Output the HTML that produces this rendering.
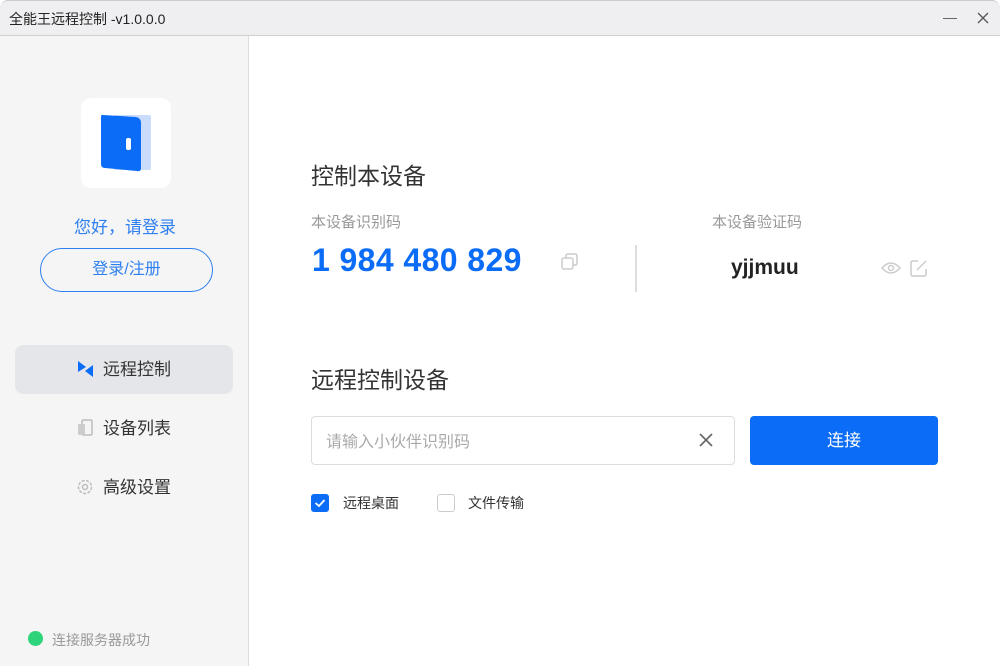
<!DOCTYPE html>
<html><head><meta charset="utf-8"><style>
*{margin:0;padding:0;box-sizing:border-box}
body{width:1000px;height:666px;overflow:hidden;background:#fff;font-family:"Liberation Sans","Noto Sans CJK SC",sans-serif;position:relative}
.a{position:absolute}
.title{left:0;top:0;width:1000px;height:36px;background:#efeff1;border-bottom:1px solid #d0d0d0;border-radius:8px 8px 0 0;border-top:1px solid #ccc}
.side{left:0;top:36px;width:249px;height:630px;background:#f5f5f5;border-right:1px solid #ddd}
.t{white-space:nowrap}
</style></head><body>
<div class="a title"></div>
<div class="a t" style="left:9px;top:9px;font-size:14px;color:#222">全能王远程控制 -v1.0.0.0</div>
<div class="a" style="left:943px;top:18px;width:14px;height:1px;background:#666"></div>
<svg class="a" style="left:977px;top:12px" width="12" height="12"><path d="M1 1L11 11M11 1L1 11" stroke="#555" stroke-width="1.3"/></svg>
<div class="a side"></div>
<div class="a" style="left:81px;top:98px;width:90px;height:90px;background:#fff;border-radius:10px"></div>
<svg class="a" style="left:100px;top:113px" width="52" height="60">
<rect x="14" y="2" width="37" height="55" rx="2" fill="#c9dcfb"/>
<path d="M3 2 L36 4 Q41 5 41 10 L41 55 Q41 59 37 58 L5 55 Q1 55 1 51 L1 5 Q1 1 3 2Z" fill="#0a6cf7"/>
<rect x="26" y="25" width="5" height="12" rx="2" fill="#fff"/>
</svg>
<div class="a t" style="left:74px;top:213px;font-size:17px;color:#2e7ff0">您好，请登录</div>
<div class="a" style="left:40px;top:248px;width:173px;height:44px;border:1.5px solid #2e7ff0;border-radius:22px;color:#2e7ff0;font-size:16px;text-align:center;line-height:41px">登录/注册</div>
<div class="a" style="left:15px;top:345px;width:218px;height:49px;background:#e5e6ea;border-radius:8px"></div>
<svg class="a" style="left:77px;top:360px" width="17" height="18"><path d="M1 1L9 7L1 12Z" fill="#0a6cf7"/><path d="M16 5L8 11L16 17Z" fill="#0a6cf7"/></svg>
<div class="a t" style="left:103px;top:355px;font-size:17px;color:#333">远程控制</div>
<svg class="a" style="left:77px;top:419px" width="16" height="18"><rect x="5" y="1" width="10" height="15" rx="1.5" fill="none" stroke="#bbb" stroke-width="1.5"/><rect x="1" y="5" width="7" height="11" rx="1" fill="#ccc"/></svg>
<div class="a t" style="left:103px;top:414px;font-size:17px;color:#333">设备列表</div>
<svg class="a" style="left:76px;top:478px" width="18" height="18"><circle cx="9" cy="9" r="6.5" fill="none" stroke="#bbb" stroke-width="1.5" stroke-dasharray="3 1.5"/><circle cx="9" cy="9" r="2.5" fill="none" stroke="#bbb" stroke-width="1.5"/></svg>
<div class="a t" style="left:103px;top:473px;font-size:17px;color:#333">高级设置</div>
<div class="a" style="left:28px;top:631px;width:15px;height:15px;border-radius:50%;background:#2ed47a"></div>
<div class="a t" style="left:52px;top:630px;font-size:14px;color:#999">连接服务器成功</div>

<div class="a t" style="left:311px;top:157px;font-size:23px;color:#333">控制本设备</div>
<div class="a t" style="left:311px;top:211px;font-size:15px;color:#999">本设备识别码</div>
<div class="a t" style="left:312px;top:242px;font-size:32px;font-weight:bold;color:#0a6cf7;letter-spacing:0.4px">1 984 480 829</div>
<svg class="a" style="left:561px;top:253px" width="18" height="18"><rect x="1" y="5" width="11" height="11" rx="2" fill="none" stroke="#ccc" stroke-width="1.5"/><path d="M5 5V3Q5 1 7 1H14Q16 1 16 3V10Q16 12 14 12H12" fill="none" stroke="#ccc" stroke-width="1.5"/></svg>
<div class="a" style="left:635px;top:245px;width:2px;height:47px;background:#ddd"></div>
<div class="a t" style="left:712px;top:211px;font-size:15px;color:#999">本设备验证码</div>
<div class="a t" style="left:731px;top:256px;font-size:21px;font-weight:bold;color:#222">yjjmuu</div>
<svg class="a" style="left:881px;top:261px" width="20" height="14"><path d="M1 7Q10 -3 19 7Q10 17 1 7Z" fill="none" stroke="#ccc" stroke-width="1.5"/><circle cx="10" cy="7" r="2.5" fill="none" stroke="#ccc" stroke-width="1.5"/></svg>
<svg class="a" style="left:910px;top:259px" width="18" height="18"><path d="M8 2H3Q1 2 1 4V15Q1 17 3 17H14Q16 17 16 15V10" fill="none" stroke="#ccc" stroke-width="1.5"/><path d="M7 11L16 2" stroke="#ccc" stroke-width="1.5"/></svg>

<div class="a t" style="left:311px;top:361px;font-size:23px;color:#333">远程控制设备</div>
<div class="a" style="left:311px;top:416px;width:424px;height:49px;border:1px solid #ddd;border-radius:4px"></div>
<div class="a t" style="left:326px;top:428px;font-size:16px;color:#aaa">请输入小伙伴识别码</div>
<svg class="a" style="left:698px;top:432px" width="16" height="16"><path d="M2 2L14 14M14 2L2 14" stroke="#666" stroke-width="1.6"/></svg>
<div class="a" style="left:750px;top:416px;width:188px;height:49px;background:#0a6cf7;border-radius:4px;color:#fff;font-size:17px;text-align:center;line-height:49px">连接</div>
<div class="a" style="left:311px;top:494px;width:18px;height:18px;background:#0a6cf7;border-radius:3px"></div>
<svg class="a" style="left:311px;top:494px" width="18" height="18"><path d="M4.5 9L8 12L13.5 6" fill="none" stroke="#fff" stroke-width="1.8"/></svg>
<div class="a t" style="left:343px;top:493px;font-size:14px;color:#333">远程桌面</div>
<div class="a" style="left:437px;top:494px;width:18px;height:18px;border:1px solid #ccc;border-radius:3px"></div>
<div class="a t" style="left:468px;top:493px;font-size:14px;color:#333">文件传输</div>
</body></html>
